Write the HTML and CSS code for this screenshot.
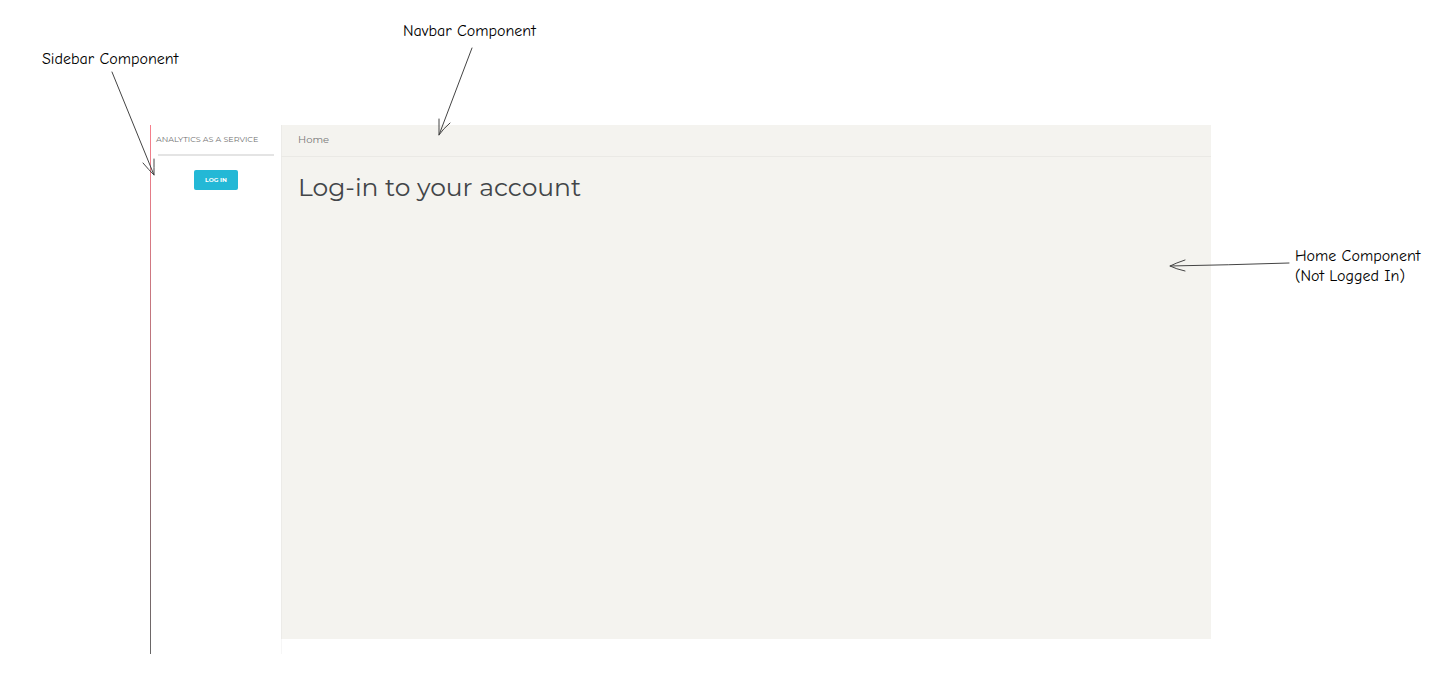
FILE: index.html
```html
<!DOCTYPE html>
<html lang="en">
<head>
<meta charset="utf-8">
<meta name="viewport" content="width=device-width, initial-scale=1">
<title>Analytics as a Service</title>
<link rel="stylesheet" href="styles.css">
</head>
<body>
<div class="canvas">
  <div class="app">
    <aside class="sidebar">
      <div class="brand">ANALYTICS AS A SERVICE</div>
      <button class="login" type="button">LOG IN</button>
    </aside>
    <main class="home">
      <nav class="navbar"><a class="nav-link" href="#">Home</a></nav>
      <h1 class="title">Log-in to your account</h1>
    </main>
  </div>
  <div class="note note-sidebar">Sidebar Component</div>
  <div class="note note-navbar">Navbar Component</div>
  <div class="note note-home">Home Component<br>(Not Logged In)</div>
  <svg class="arrow arrow-sidebar" width="50" height="110" viewBox="0 0 50 110" aria-hidden="true">
    <path d="M4 4L46 107M35 95Q41 102 46 107Q46 100 46 91"/>
  </svg>
  <svg class="arrow arrow-navbar" width="46" height="96" viewBox="0 0 46 96" aria-hidden="true">
    <path d="M38 4L5 91M5 75Q5 85 5 91Q9 85 16 79"/>
  </svg>
  <svg class="arrow arrow-home" width="124" height="22" viewBox="0 0 124 22" aria-hidden="true">
    <path d="M122 9Q61 11 3 12M18 6Q9 9 3 12Q9 15 18 17"/>
  </svg>
</div>
</body>
</html>
```
FILE: styles.css
```css
* {
  box-sizing: border-box;
}

body {
  margin: 0;
  background: #fff;
  color: #424548;
  font-family: Montserrat, Inter, "Open Sans", sans-serif;
}

.canvas {
  position: relative;
  min-height: 100vh;
  padding: 125px 223px 23px 150px;
}

.app {
  display: grid;
  grid-template-columns: 131px 1fr;
  min-height: 529px;
}

.sidebar {
  display: flex;
  flex-direction: column;
  align-items: center;
  border-left: 1px solid;
  border-image: linear-gradient(#f77f8c, #666) 1;
  box-shadow: 1px 0 #f6f6f6;
}

.brand {
  align-self: stretch;
  margin: 0 7px 14px 7px;
  height: 31px;
  border-bottom: 2px solid #e4e4e4;
  color: #707070;
  font-size: 8px;
  line-height: 28px;
  white-space: nowrap;
  text-indent: -2px;
}

.login {
  width: 44px;
  height: 20px;
  padding: 0;
  border: 0;
  border-radius: 2px;
  background: #23b8d6;
  color: #fff;
  font: 700 6px Montserrat, Inter, sans-serif;
}

.home {
  margin-bottom: 15px;
  background: #f4f3ef;
  box-shadow: inset 1px 0 #ecebe8;
}

.navbar {
  display: flex;
  height: 32px;
  padding-left: 17px;
  border-bottom: 1px solid #eae9e5;
  line-height: 30px;
}

.nav-link {
  color: #777;
  font-size: 10px;
  text-decoration: none;
}

.title {
  margin: 14px 0 0 17px;
  font-size: 25px;
  font-weight: 400;
  line-height: 32px;
}

.note {
  position: absolute;
  color: #000;
  font: 16px/20px Virgil, Excalifont, "Comic Neue", Lato, sans-serif;
  white-space: nowrap;
}

.note-sidebar {
  top: 49px;
  left: 42px;
}

.note-navbar {
  top: 21px;
  left: 403px;
}

.note-home {
  top: 246px;
  left: calc(100% - 139px);
}

.arrow {
  position: absolute;
  fill: none;
  stroke: #444;
  stroke-width: 1;
  stroke-linecap: round;
}

.arrow-sidebar {
  top: 68px;
  left: 108px;
}

.arrow-navbar {
  top: 44px;
  left: 434px;
}

.arrow-home {
  top: 254px;
  right: 143px;
}
```
